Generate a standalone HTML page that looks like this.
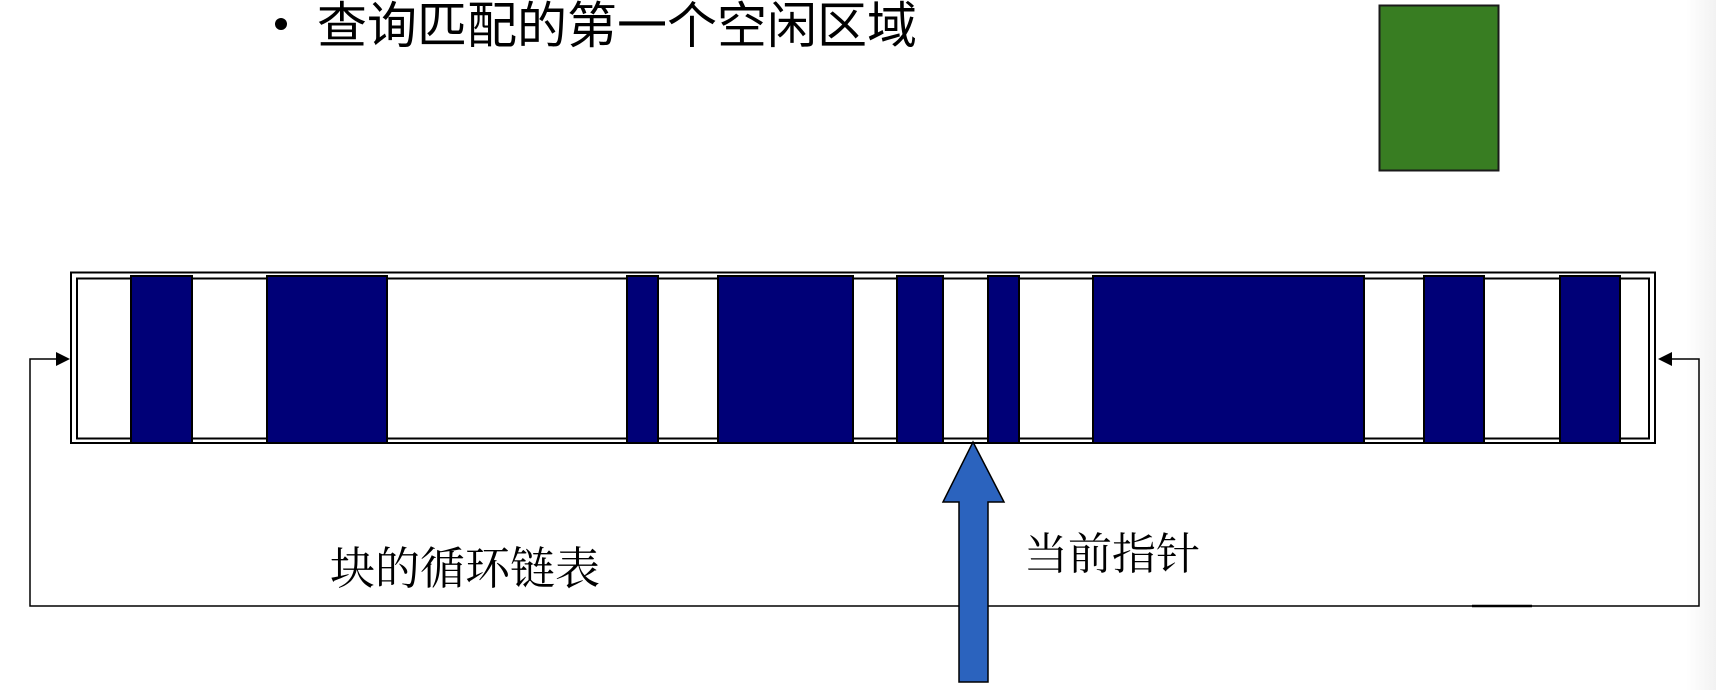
<!DOCTYPE html>
<html><head><meta charset="utf-8"><style>
html,body{margin:0;padding:0;background:#fff;}
body{width:1716px;height:690px;overflow:hidden;position:relative;font-family:"Liberation Sans","Noto Sans CJK SC",sans-serif;}
.t{position:absolute;white-space:nowrap;color:#000;line-height:1;}
.s{font-family:"Liberation Serif","Noto Serif CJK SC",serif;}
</style></head><body>
<div style="position:absolute;right:0;top:0;width:30px;height:690px;background:linear-gradient(to right,#fff,#f2f2f2);"></div>
<svg width="1716" height="690" style="position:absolute;left:0;top:0">
<rect x="1379.5" y="5.5" width="119" height="165" fill="#387d22" stroke="#1a1a1a" stroke-width="2"/>
<rect x="71" y="272.5" width="1584" height="170.5" fill="#fff" stroke="#000" stroke-width="2"/>
<rect x="77" y="278.5" width="1572" height="160" fill="none" stroke="#000" stroke-width="2"/>
<g fill="#000077" stroke="#000" stroke-width="2">
<rect x="131" y="276" width="61" height="167"/>
<rect x="267" y="276" width="120" height="167"/>
<rect x="627" y="276" width="31" height="167"/>
<rect x="718" y="276" width="135" height="167"/>
<rect x="897" y="276" width="46" height="167"/>
<rect x="988" y="276" width="31" height="167"/>
<rect x="1093" y="276" width="271" height="167"/>
<rect x="1424" y="276" width="60" height="167"/>
<rect x="1560" y="276" width="60" height="167"/>
</g>
<polyline points="56,359 30,359 30,606 1699,606 1699,359 1672,359" fill="none" stroke="#000" stroke-width="1.5"/>
<polygon points="70,359 56,352 56,366" fill="#000"/>
<polygon points="1658,359 1672,352 1672,366" fill="#000"/>
<line x1="1472" y1="606" x2="1532" y2="606" stroke="#000" stroke-width="2.5"/>
<polygon points="973,442 1004,502 988,502 988,682 959,682 959,502 943,502" fill="#2b63be" stroke="#000" stroke-width="1.5"/>
<circle cx="281" cy="24" r="6" fill="#000"/>
</svg>
<div class="t" style="left:317px;top:1px;font-size:50px;">查询匹配的第一个空闲区域</div>
<div class="t s" style="left:330px;top:547px;font-size:45px;">块的循环链表</div>
<div class="t s" style="left:1024px;top:533px;font-size:44px;">当前指针</div>
</body></html>
